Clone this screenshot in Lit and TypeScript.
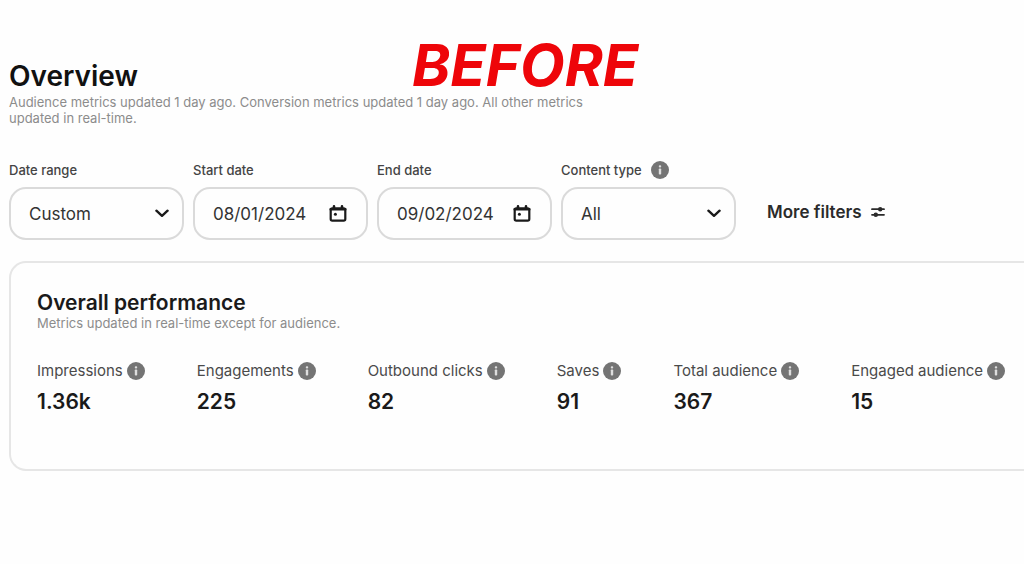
import { LitElement, html, css } from "lit";
import { customElement } from "lit/decorators.js";

const infoIcon = html`<svg class="info" viewBox="0 0 18 18" aria-hidden="true">
  <circle cx="9" cy="9" r="9" fill="#747474" />
  <rect x="7.8" y="7.4" width="2.4" height="6.2" rx="0.8" fill="#dedede" />
  <rect x="7.8" y="4.2" width="2.4" height="2.4" rx="1" fill="#dedede" />
</svg>`;

const chevron = html`<svg class="chevron" viewBox="0 0 14 9" aria-hidden="true">
  <path d="M1.4 1.7 7 6.8l5.6-5.1" fill="none" stroke="#1a1a1a" stroke-width="2.4" stroke-linecap="round" stroke-linejoin="round" />
</svg>`;

const calendar = html`<svg class="calendar" viewBox="0 0 18 17" aria-hidden="true">
  <rect x="1.7" y="3.4" width="14.6" height="12.2" rx="1.6" fill="none" stroke="#1a1a1a" stroke-width="2.2" />
  <path d="M1.7 4.2h14.6M5 1.4v2.4M13 1.4v2.4" fill="none" stroke="#1a1a1a" stroke-width="2.6" stroke-linecap="round" />
  <circle cx="6.4" cy="9.3" r="1.5" fill="#1a1a1a" />
</svg>`;

const sliders = html`<svg class="sliders" viewBox="0 0 14 12" aria-hidden="true">
  <path d="M1 3.2h12M1 8.8h12" stroke="#2b2b2b" stroke-width="1.8" stroke-linecap="round" />
  <circle cx="9.2" cy="3.2" r="2.2" fill="#2b2b2b" />
  <circle cx="4.8" cy="8.8" r="2.2" fill="#2b2b2b" />
</svg>`;

const metrics = [
  ["Impressions", "1.36k"],
  ["Engagements", "225"],
  ["Outbound clicks", "82"],
  ["Saves", "91"],
  ["Total audience", "367"],
  ["Engaged audience", "15"],
];

@customElement("app-root")
export class AppRoot extends LitElement {
  static styles = css`
    :host {
      display: block;
      box-sizing: border-box;
      min-height: 100vh;
      padding: 42px 0 48px 9px;
      overflow: hidden;
      background: #fefefe;
      color: #1a1a1a;
      font-family: Inter, "Liberation Sans", sans-serif;
    }
    * { box-sizing: border-box; }
    svg { display: block; flex: none; }
    h1, h2, p, dl, dd { margin: 0; }
    .heading { display: flex; align-items: baseline; gap: 274px; }
    h1 { font-size: 28px; line-height: 36px; font-weight: 600; color: #111; }
    .stamp {
      font: italic 700 58px/46px Inter, "Liberation Sans", sans-serif;
      color: #ee0509;
    }
    .note { font-size: 13px; line-height: 16px; color: #8c8c8c; }
    .intro { max-width: 600px; }
    .filters { display: flex; flex-wrap: wrap; align-items: flex-end; gap: 9px; margin-top: 34px; }
    .field { width: 175px; }
    .label {
      display: flex; align-items: center; gap: 9px;
      height: 20px; margin-bottom: 7px;
      font-size: 13px; font-weight: 500; color: #444;
    }
    .box { display: grid; align-items: center; }
    .box > * { grid-area: 1 / 1; }
    .control {
      width: 100%; height: 53px; margin: 0; padding: 0 18px;
      border: 2px solid #dadada; border-radius: 17px;
      background: transparent; color: #333;
      font: 400 17px/20px Inter, "Liberation Sans", sans-serif;
      appearance: none; outline-offset: 2px;
    }
    .chevron, .calendar { justify-self: end; pointer-events: none; }
    .chevron { width: 14px; height: 9px; margin-right: 15px; }
    .calendar { width: 18px; height: 17px; margin-right: 21px; }
    .info { width: 18px; height: 18px; }
    .more {
      display: flex; align-items: center; gap: 9px;
      height: 56px; margin-left: 22px; padding: 0;
      border: 0; background: none; color: #2b2b2b;
      font: 600 17px/20px Inter, "Liberation Sans", sans-serif;
    }
    .sliders { width: 14px; height: 12px; }
    .card {
      margin-top: 21px; padding: 28px 0 53px 26px;
      border: 2px solid #e6e6e6; border-right: 0;
      border-radius: 17px 0 0 17px;
    }
    h2 { font-size: 21px; line-height: 24px; font-weight: 600; }
    .metrics { display: flex; gap: 52px; margin-top: 30px; white-space: nowrap; }
    .metric dt {
      display: flex; align-items: center; gap: 4px;
      font-size: 15px; line-height: 20px; color: #4a4a4a;
    }
    .metric dd { margin-top: 7px; font-size: 21px; line-height: 28px; font-weight: 600; }
  `;

  render() {
    return html`
      <header>
        <div class="heading">
          <h1>Overview</h1>
          <strong class="stamp">BEFORE</strong>
        </div>
        <p class="note intro">
          Audience metrics updated 1 day ago. Conversion metrics updated 1 day ago. All other metrics updated in real-time.
        </p>
      </header>
      <form class="filters">
        <div class="field">
          <label class="label" for="range">Date range</label>
          <div class="box">
            <select class="control" id="range"><option>Custom</option></select>${chevron}
          </div>
        </div>
        <div class="field">
          <label class="label" for="start">Start date</label>
          <div class="box">
            <input class="control" id="start" type="text" value="08/01/2024" />${calendar}
          </div>
        </div>
        <div class="field">
          <label class="label" for="end">End date</label>
          <div class="box">
            <input class="control" id="end" type="text" value="09/02/2024" />${calendar}
          </div>
        </div>
        <div class="field">
          <label class="label" for="type">Content type ${infoIcon}</label>
          <div class="box">
            <select class="control" id="type"><option>All</option></select>${chevron}
          </div>
        </div>
        <button class="more" type="button">More filters ${sliders}</button>
      </form>
      <section class="card">
        <h2>Overall performance</h2>
        <p class="note">Metrics updated in real-time except for audience.</p>
        <div class="metrics">
          ${metrics.map(
            ([name, value]) => html`<dl class="metric">
              <dt>${name} ${infoIcon}</dt>
              <dd>${value}</dd>
            </dl>`
          )}
        </div>
      </section>
    `;
  }
}
